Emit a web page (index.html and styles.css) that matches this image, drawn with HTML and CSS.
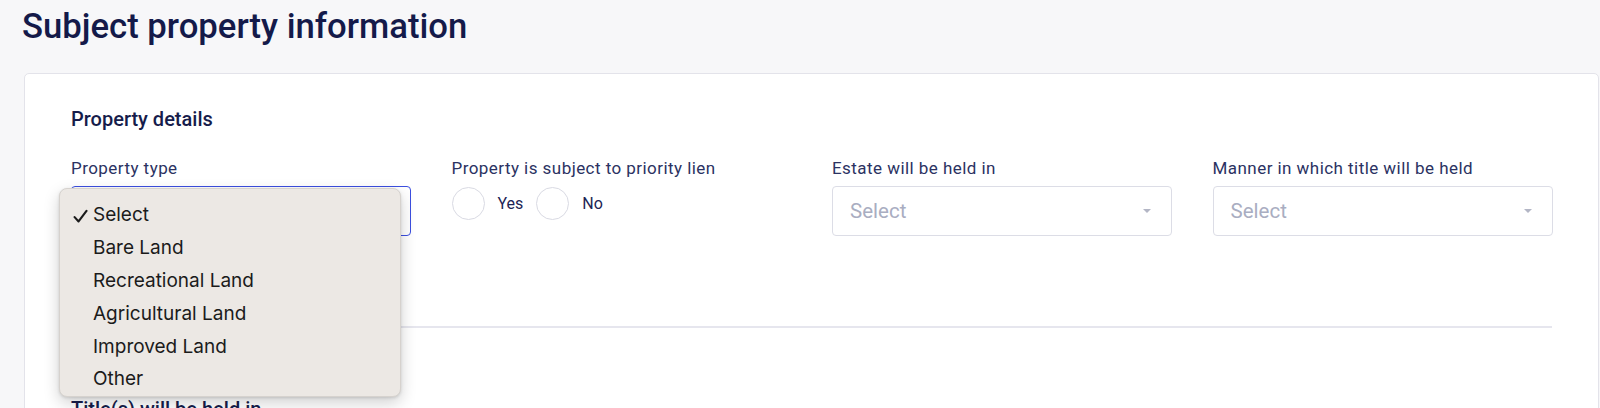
FILE: index.html
```html
<!DOCTYPE html>
<html lang="en">
<head>
<meta charset="utf-8">
<title>Subject property information</title>
<link rel="stylesheet" href="styles.css">
</head>
<body>
<div class="page">
  <h1 class="page-title">Subject property information</h1>
  <div class="card">
    <section class="section">
      <h2 class="section-title">Property details</h2>
      <div class="grid">
        <div class="field">
          <label class="label">Property type</label>
          <div class="select-wrap">
            <div class="select select-active"></div>
            <ul class="menu">
              <li class="menu-item"><svg class="check" width="14" height="14" viewBox="0 0 14 14"><path d="M1.5 7.6 L5.2 11.6 L12.6 1.8" fill="none" stroke="#1b1b1b" stroke-width="2" stroke-linecap="round" stroke-linejoin="round"/></svg>Select</li>
              <li class="menu-item">Bare Land</li>
              <li class="menu-item">Recreational Land</li>
              <li class="menu-item">Agricultural Land</li>
              <li class="menu-item">Improved Land</li>
              <li class="menu-item">Other</li>
            </ul>
          </div>
        </div>
        <div class="field">
          <label class="label">Property is subject to priority lien</label>
          <div class="radios">
            <span class="radio"></span><span class="radio-label">Yes</span>
            <span class="radio"></span><span class="radio-label">No</span>
          </div>
        </div>
        <div class="field">
          <label class="label">Estate will be held in</label>
          <div class="select"><span class="placeholder">Select</span><span class="caret"></span></div>
        </div>
        <div class="field">
          <label class="label">Manner in which title will be held</label>
          <div class="select"><span class="placeholder">Select</span><span class="caret"></span></div>
        </div>
      </div>
    </section>
    <hr class="divider">
    <section class="section">
      <h2 class="section-title">Title(s) will be held in</h2>
    </section>
  </div>
</div>
</body>
</html>
```

FILE: styles.css
```css
* { box-sizing: border-box; }
html, body {
  margin: 0;
  padding: 0;
  background: #f7f7f9;
  font-family: Roboto, "Liberation Sans", Arial, sans-serif;
  overflow: hidden;
}
.page {
  padding: 5px 1px 0 24px;
}
.page-title {
  margin: 0 0 26px -2px;
  font-size: 34.7px;
  line-height: 42px;
  font-weight: 500;
  color: #141a4a;
}
.card {
  background: #ffffff;
  border: 1px solid #e3e3ea;
  border-radius: 5px;
  padding: 33px 46px 0 46px;
  min-height: 400px;
}
.section-title {
  margin: 0;
  font-size: 20px;
  line-height: 24px;
  font-weight: 500;
  color: #161c4b;
}
.grid {
  display: grid;
  grid-template-columns: repeat(4, 340px);
  column-gap: 40.5px;
  margin-top: 27px;
}
.field {
  display: flex;
  flex-direction: column;
}
.label {
  font-size: 17px;
  letter-spacing: 0.45px;
  line-height: 20px;
  color: #2b3262;
  margin-bottom: 8px;
}
.select-wrap {
  position: relative;
}
.select {
  height: 50px;
  border: 1px solid #dcdde6;
  border-radius: 4px;
  display: flex;
  align-items: center;
  justify-content: space-between;
  padding: 0 20px 0 17px;
  background: #fff;
}
.select-active {
  border: 1.5px solid #3c4fe0;
}
.placeholder {
  font-size: 20.5px;
  color: #a9adc1;
}
.caret {
  width: 0;
  height: 0;
  border-left: 4.5px solid transparent;
  border-right: 4.5px solid transparent;
  border-top: 4.5px solid #b3b6c5;
}
.radios {
  display: flex;
  align-items: center;
  height: 35px;
}
.radio {
  width: 33px;
  height: 33px;
  border: 1px solid #d9dae3;
  border-radius: 50%;
  background: #fff;
}
.radio-label {
  font-size: 16px;
  color: #1d2454;
  margin: 0 13px 0 13px;
}
.menu {
  position: absolute;
  left: -12px;
  top: 2px;
  width: 342px;
  margin: 0;
  padding: 10px 0 0 0;
  list-style: none;
  height: 209px;
  background: #ece8e4;
  border: 1px solid #d6d2ce;
  border-radius: 8px;
  box-shadow: 0 6px 16px rgba(0, 0, 0, 0.18), 0 1px 3px rgba(0, 0, 0, 0.12);
  z-index: 10;
}
.menu-item {
  position: relative;
  height: 32.9px;
  line-height: 32.9px;
  padding-left: 33px;
  font-family: Inter, "Noto Sans", sans-serif;
  font-size: 19px;
  color: #1b1b1b;
}
.check {
  position: absolute;
  left: 13px;
  top: 10px;
  width: 15px;
  height: 15px;
}
.divider {
  border: 0;
  height: 2px;
  background: #e6e6ee;
  margin: 90px 0 0 0;
  width: 1481px;
}
.divider + .section {
  padding-top: 69px;
}
```
